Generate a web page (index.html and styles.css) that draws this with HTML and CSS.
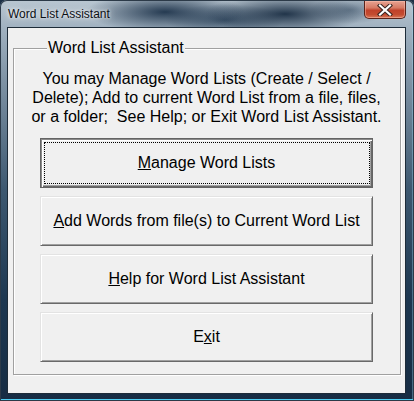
FILE: index.html
```html
<!DOCTYPE html>
<html lang="en">

<head>
    <meta charset="UTF-8">
    <title>Word List Assistant</title>
    <link rel="stylesheet" href="styles.css">
</head>

<body>

    <div class="window">
        <div class="titlebar">
            <span class="title">Word List Assistant</span>
            <div class="close-btn">
                <svg width="16" height="12" viewBox="0 0 16 12">
                    <path d="M3 1.5 L13 10.5 M13 1.5 L3 10.5" stroke="#3a2420" stroke-width="4.2" stroke-linecap="square" fill="none" />
                    <path d="M3 1.5 L13 10.5 M13 1.5 L3 10.5" stroke="#ffffff" stroke-width="2.2" stroke-linecap="square" fill="none" />
                </svg>
            </div>
        </div>

        <div class="client">
            <fieldset class="group">
                <legend>Word List Assistant</legend>

                <p class="intro">
                    You may Manage Word Lists (Create / Select /<br>
                    Delete); Add to current Word List from a file, files,<br>
                    or a folder;&nbsp; See Help; or Exit Word List Assistant.
                </p>

                <!-- Buttons -->
                <div class="actions">
                    <button class="action-btn default-btn"><u>M</u>anage Word Lists</button>
                    <button class="action-btn"><u>A</u>dd Words from file(s) to Current Word List</button>
                    <button class="action-btn"><u>H</u>elp for Word List Assistant</button>
                    <button class="action-btn">E<u>x</u>it</button>
                </div>
            </fieldset>
        </div>
    </div>

</body>

</html>
```

FILE: styles.css
```css
body {
    margin: 0;
    padding: 0;
    font-family: 'Liberation Sans', Arial, sans-serif;
    background: #1c3046;
}

.window {
    width: 414px;
    height: 401px;
    box-sizing: border-box;
    padding: 0 8px 7px 7px;
    display: flex;
    flex-direction: column;
    border-radius: 7px 7px 0 0;
    background:
        radial-gradient(ellipse 80px 20px at 165px 12px, rgba(22, 44, 68, 0.9), rgba(22, 44, 68, 0) 100%),
        radial-gradient(ellipse 80px 20px at 285px 14px, rgba(18, 38, 60, 0.9), rgba(18, 38, 60, 0) 100%),
        radial-gradient(ellipse 60px 16px at 225px 20px, rgba(34, 58, 82, 0.75), rgba(34, 58, 82, 0) 100%),
        radial-gradient(ellipse 40px 14px at 350px 10px, rgba(40, 64, 88, 0.5), rgba(40, 64, 88, 0) 100%),
        linear-gradient(to bottom, #b9c6d1 0, #9fb0bf 30px, #7f93a5 80px, #3d5870 190px, #1d3750 300px, #162c43 100%);
    box-shadow:
        inset 0 0 0 1px #2c3a48,
        inset 0 -2px 0 #4fcdf0,
        inset 1px 0 0 rgba(160, 220, 245, 0.35),
        inset -2px 0 0 rgba(160, 220, 245, 0.35);
}

.titlebar {
    height: 27px;
    display: flex;
    align-items: flex-start;
    justify-content: space-between;
    padding-left: 1px;
}

.title {
    margin-top: 7px;
    font-size: 12px;
    line-height: 15px;
    color: #0b0f14;
    text-shadow: 0 0 6px rgba(255, 255, 255, 0.9), 0 0 3px rgba(255, 255, 255, 0.8);
}

.close-btn {
    width: 42px;
    height: 18px;
    box-sizing: border-box;
    margin-top: 1px;
    display: flex;
    align-items: center;
    justify-content: center;
    border: 1px solid #5a2219;
    border-top: none;
    border-radius: 0 0 5px 5px;
    background: linear-gradient(to bottom, #e8a392 0, #d67a64 40%, #c0412a 55%, #c44c30 80%, #d9785a 100%);
    box-shadow: inset 0 0 0 1px rgba(255, 200, 185, 0.45);
}

.close-btn svg {
    display: block;
}

.client {
    flex: 1;
    display: flex;
    flex-direction: column;
    background: #f0f0f0;
    border: 1px solid #1d2b38;
    padding: 11px 4px 18px 5px;
}

.group {
    flex: 1;
    margin: 0;
    padding: 0 27px 0 26px;
    border: 1px solid #a0a0a0;
    box-shadow: 1px 1px 0 #ffffff, inset 1px 1px 0 #ffffff;
    min-width: 0;
}

.group legend {
    margin-left: 7px;
    padding: 0 1px;
    font-size: 16px;
    line-height: 18px;
    color: #000;
    background: #f0f0f0;
}

.intro {
    margin: 12px -15px 0;
    font-size: 16px;
    line-height: 19px;
    text-align: center;
    white-space: nowrap;
    color: #000;
}

.actions {
    display: flex;
    flex-direction: column;
    gap: 8px;
    margin-top: 12px;
}

/* Buttons */
.action-btn {
    position: relative;
    height: 50px;
    margin: 0;
    padding: 0;
    font-family: 'Liberation Sans', Arial, sans-serif;
    font-size: 16px;
    color: #000;
    background: #f0f0f0;
    border: 1px solid;
    border-color: #e3e3e3 #696969 #696969 #e3e3e3;
    box-shadow: inset 1px 1px 0 #ffffff, inset -1px -1px 0 #a0a0a0;
    outline: none;
}

.default-btn {
    border: 1px solid #646464;
    box-shadow:
        inset 1px 1px 0 #8a8a8a,
        inset 2px 2px 0 #ffffff,
        inset -1px -1px 0 #696969,
        inset -2px -2px 0 #a0a0a0;
}

.default-btn::after {
    content: "";
    position: absolute;
    top: 3px;
    left: 3px;
    right: 2px;
    bottom: 3px;
    border: 1px dotted #000;
}
```
